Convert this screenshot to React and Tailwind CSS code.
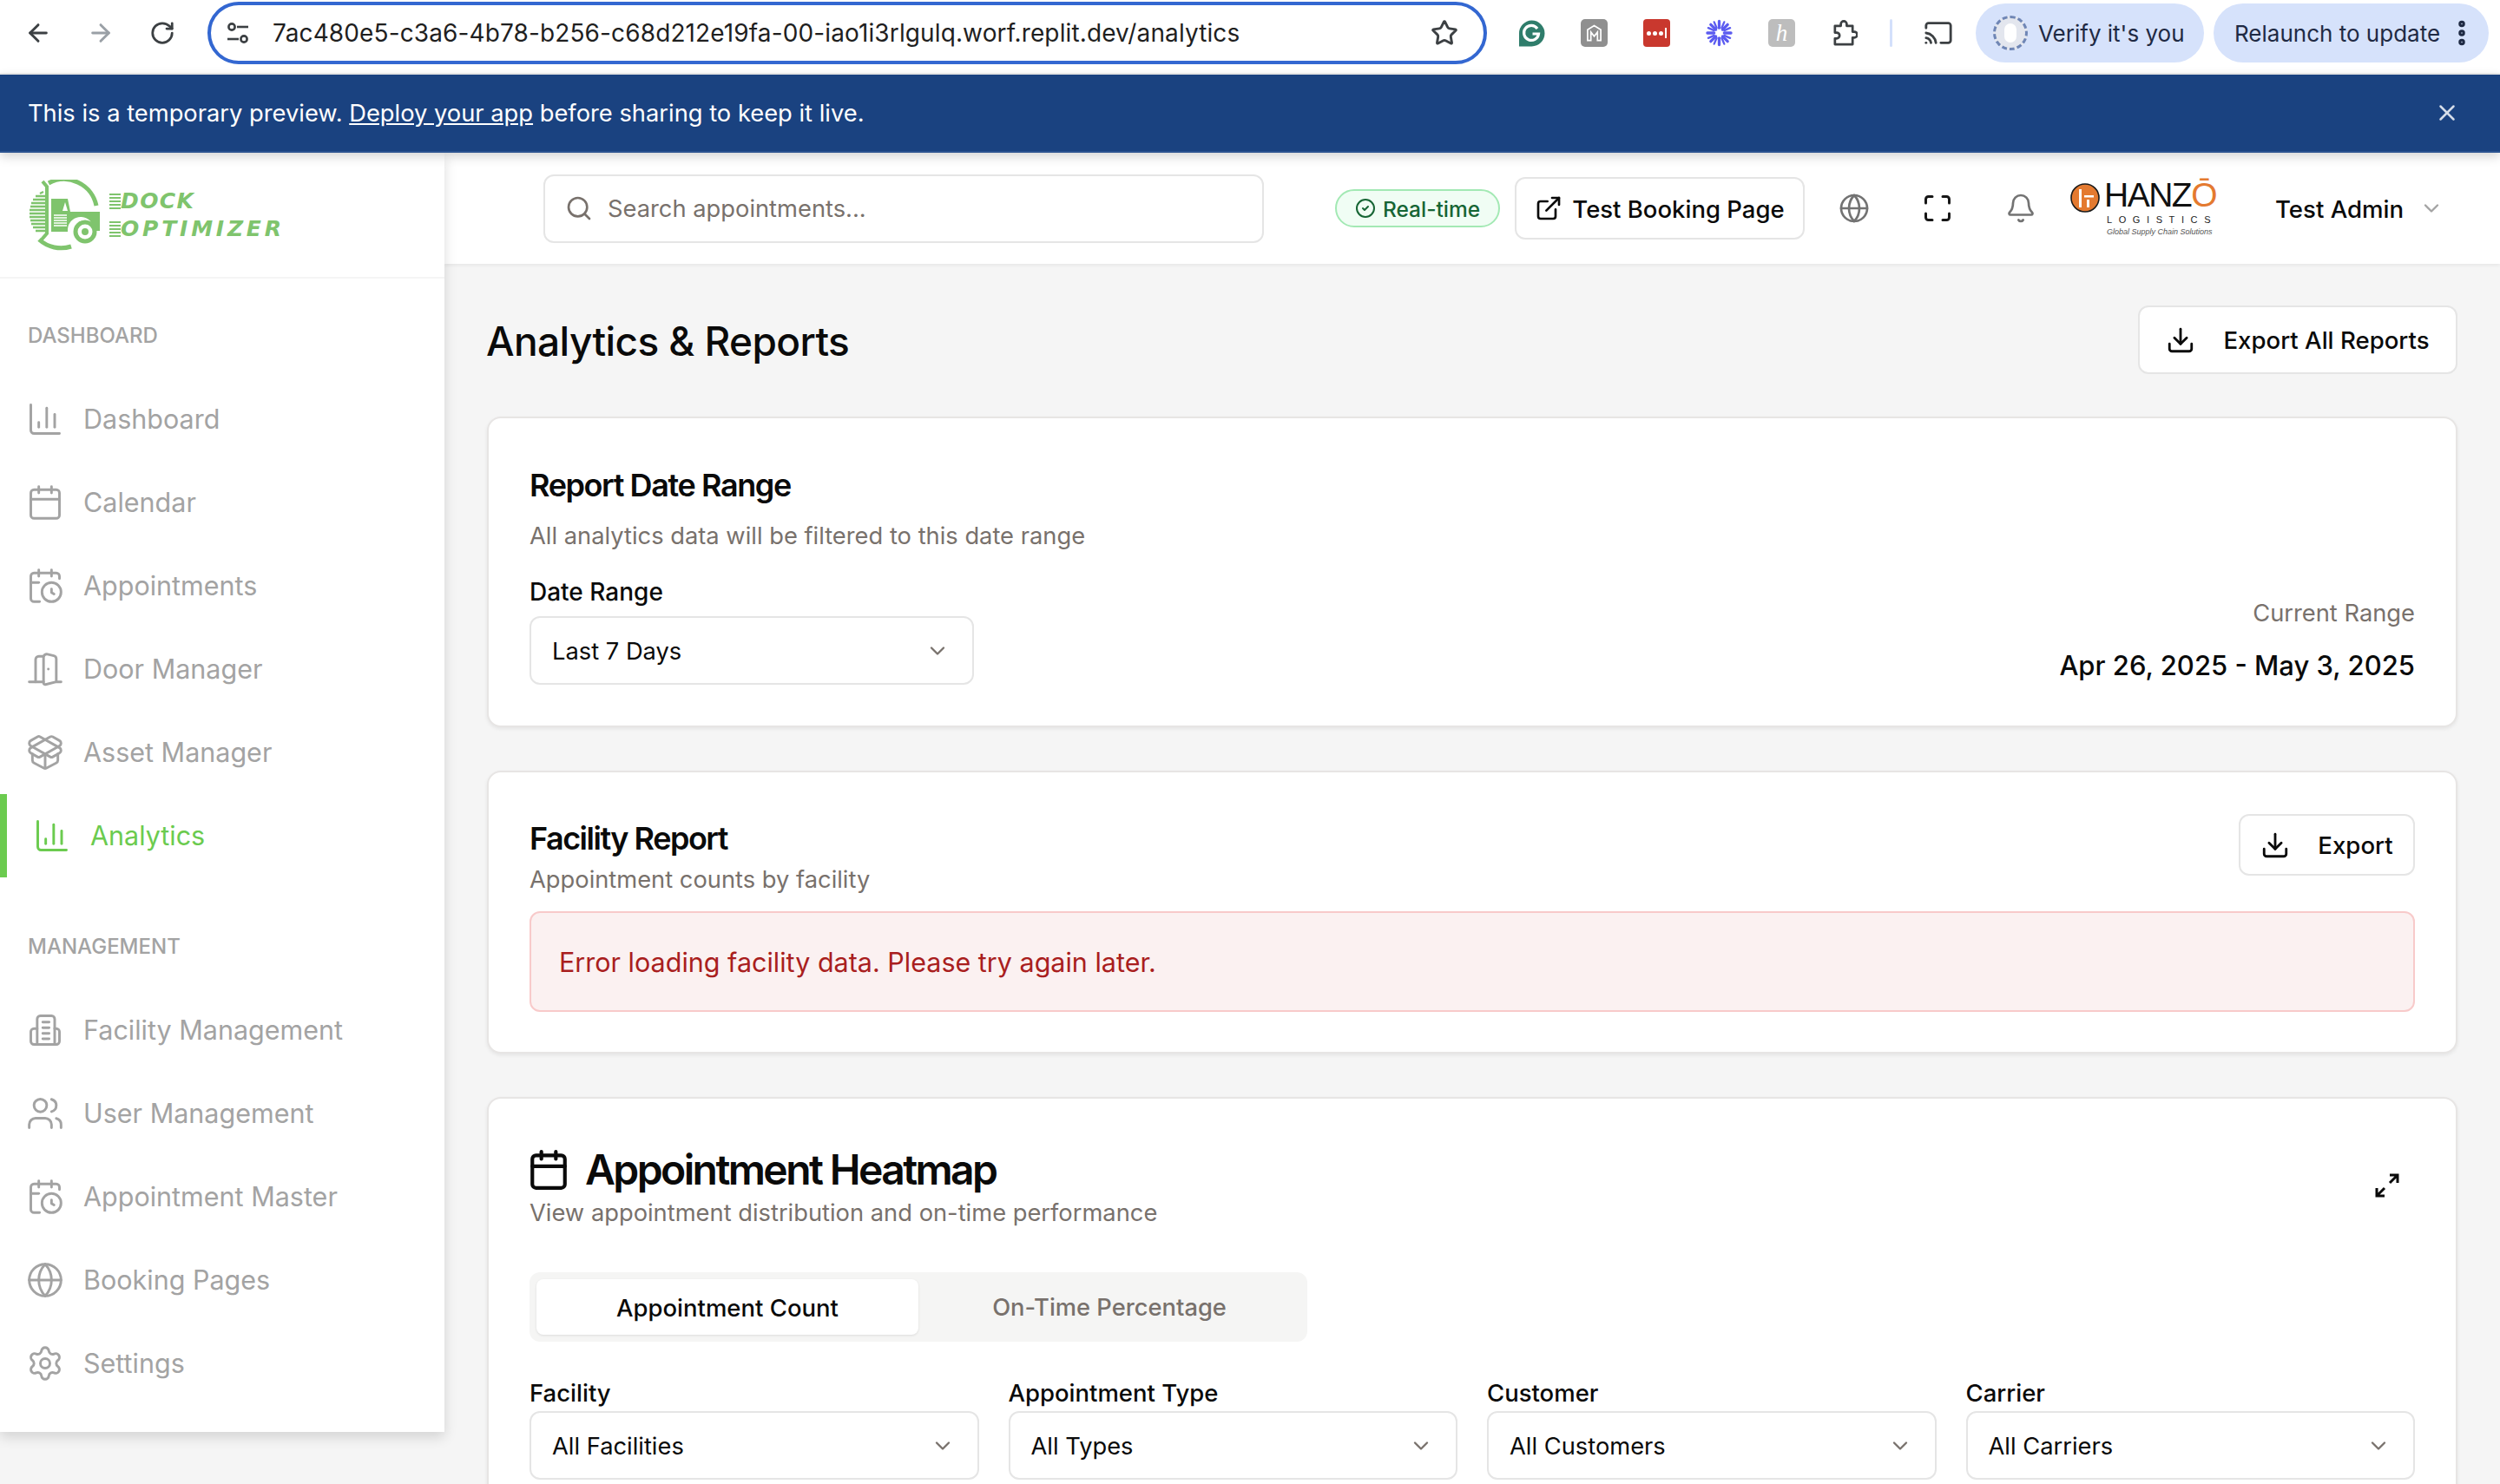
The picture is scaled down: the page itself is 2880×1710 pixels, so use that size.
import React from 'react';
import {
  ArrowLeft, ArrowRight, RotateCw, Star, Cast, MoreVertical, X, Search, CircleCheck, ExternalLink,
  Globe, Maximize, Bell, ChevronDown, ChartColumn, Calendar, CalendarClock, DoorOpen, PackageOpen,
  Users, Settings, Download,
} from 'lucide-react';

function FacilityIcon({ className, strokeWidth }) {
  return (
    <svg viewBox="0 0 24 24" className={className} fill="none" stroke="currentColor" strokeWidth={strokeWidth} strokeLinecap="round" strokeLinejoin="round">
      <path d="M7 21V5a2 2 0 0 1 2-2h7a2 2 0 0 1 2 2v16" />
      <path d="M7 11H5a2 2 0 0 0-2 2v6a2 2 0 0 0 2 2h14a2 2 0 0 0 2-2v-6a2 2 0 0 0-2-2h-1" />
      <path d="M10.5 7h4M10.5 10.500h4M10.5 14h4M10.500 17.500h4" />
    </svg>
  );
}

const mainNav = [
  { label: 'Dashboard', icon: ChartColumn },
  { label: 'Calendar', icon: Calendar },
  { label: 'Appointments', icon: CalendarClock },
  { label: 'Door Manager', icon: DoorOpen },
  { label: 'Asset Manager', icon: PackageOpen },
  { label: 'Analytics', icon: ChartColumn, active: true },
];

const managementNav = [
  { label: 'Facility Management', icon: FacilityIcon },
  { label: 'User Management', icon: Users },
  { label: 'Appointment Master', icon: CalendarClock },
  { label: 'Booking Pages', icon: Globe },
  { label: 'Settings', icon: Settings },
];

function TuneIcon() {
  return (
    <svg viewBox="0 0 26 26" className="w-[26px] h-[26px]" fill="none" stroke="#3c4043" strokeWidth="2.6">
      <circle cx="6" cy="6" r="3.6" />
      <path d="M12 6h13" />
      <circle cx="20" cy="20" r="3.6" />
      <path d="M1 20h13" />
    </svg>
  );
}

function PuzzleIcon() {
  return (
    <svg viewBox="0 0 32 32" className="w-[31px] h-[31px]" fill="none" stroke="#3c4043" strokeWidth="2.8" strokeLinejoin="round">
      <path d="M5 7h7V5a3.5 3.5 0 0 1 7 0v2h7v7h2a3.5 3.5 0 0 1 0 7h-2v8H5v-7h2a3 3 0 0 0 0-7H5z" />
    </svg>
  );
}

function ExtensionIcons() {
  return (
    <div className="flex items-center gap-[41px] ml-[36px]">
      <svg viewBox="0 0 31 31" className="w-[31px] h-[31px]">
        <path d="M15.5 0.5a15 15 0 1 1 0 30H1V15.5A15 15 0 0 1 15.5.5z" fill="#2f7d6b" />
        <path d="M22 10a8.5 8.5 0 1 0 1.5 6h-7" fill="none" stroke="#fff" strokeWidth="3.2" />
      </svg>
      <div className="w-[31px] h-[32px] rounded-[5px] bg-[#8f8f8f] flex items-center justify-center">
        <svg viewBox="0 0 20 22" className="w-[19px] h-[22px]" fill="none" stroke="#fff" strokeWidth="1.8">
          <path d="M2 7l8-5 8 5v13h-4V10l-4 5-4-5v10H2z" />
        </svg>
      </div>
      <div className="w-[31px] h-[32px] rounded-[4px] bg-[#c9382e] flex items-center justify-center gap-[2px]">
        <span className="w-[5px] h-[5px] rounded-full bg-white" />
        <span className="w-[5px] h-[5px] rounded-full bg-white" />
        <span className="w-[5px] h-[5px] rounded-full bg-white" />
        <span className="w-[2px] h-[12px] bg-white" />
      </div>
      <svg viewBox="0 0 32 32" className="w-[31px] h-[32px]" stroke="#5b5bf0" strokeWidth="3.4" strokeLinecap="round">
        <path d="M16 2v8M16 22v8M2 16h8M22 16h8M6 6l6 6M20 20l6 6M26 6l-6 6M12 20l-6 6" />
        <path d="M10 3l3 7M22 3l-3 7M10 29l3-7M22 29l-3-7M3 10l7 3M3 22l7-3M29 10l-7 3M29 22l-7-3" strokeWidth="2.4" />
      </svg>
      <div className="w-[31px] h-[32px] rounded-[5px] bg-[#bdbdbd] flex items-center justify-center text-white italic text-[27px] leading-none font-['Liberation_Serif',serif]">
        h
      </div>
      <PuzzleIcon />
    </div>
  );
}

function BrowserBar() {
  return (
    <div className="h-[86px] pb-[8px] bg-white border-b-2 border-[#eeeeee] flex items-center pl-[28px] text-[28px] font-['Inter',sans-serif]">
      <ArrowLeft className="w-[32px] h-[32px] text-[#3c4043]" strokeWidth={2.2} />
      <ArrowRight className="w-[32px] h-[32px] ml-[40px] text-[#9aa0a6]" strokeWidth={2.2} />
      <RotateCw className="w-[30px] h-[30px] ml-[40px] text-[#3c4043]" strokeWidth={2.2} />
      <div className="ml-[37px] w-[1474px] h-[72px] rounded-full border-[4px] border-[#3367d1] flex items-center pl-[18px] pr-[29px]">
        <TuneIcon />
        <span className="ml-[27px] text-[#1f1f1f] tracking-[0.12px] whitespace-nowrap">
          7ac480e5-c3a6-4b78-b256-c68d212e19fa-00-iao1i3rlgulq.worf.replit.dev/analytics
        </span>
        <Star className="ml-auto w-[32px] h-[32px] text-[#3c4043]" strokeWidth={2.2} />
      </div>
      <ExtensionIcons />
      <div className="ml-[37px] w-[3px] h-[32px] bg-[#d3e0fb] rounded-full" />
      <Cast className="ml-[36px] w-[34px] h-[34px] text-[#3c4043]" strokeWidth={2} />
      <div className="ml-[26px] w-[263px] h-[68px] rounded-full bg-[#d6e2fb] flex items-center pl-[20px] text-[#1f2a44]">
        <div className="w-[40px] h-[40px] rounded-full border-[3px] border-dashed border-[#6f86b5] bg-[#e3e6ee] flex items-center justify-center">
          <span className="w-[14px] h-[22px] rounded-full bg-white" />
        </div>
        <span className="ml-[12px] text-[26px] whitespace-nowrap">Verify it's you</span>
      </div>
      <div className="ml-[11px] w-[317px] h-[68px] rounded-full bg-[#d6e2fb] flex items-center pl-[24px] text-[#1f2a44]">
        <span className="text-[26px] whitespace-nowrap">Relaunch to update</span>
        <MoreVertical className="ml-[7px] w-[36px] h-[36px] text-[#1f2a44]" strokeWidth={3} />
      </div>
    </div>
  );
}

function TruckLogo() {
  return (
    <svg viewBox="0 0 84 82" className="w-[84px] h-[82px] shrink-0" fill="none">
      <path d="M24 4a38 38 0 0 1 55 26" stroke="#7fc46d" strokeWidth="5" />
      <path d="M50 77a38 38 0 0 1-37-8" stroke="#7fc46d" strokeWidth="5" />
      <path d="M17 2l5 6v54l-6 7" stroke="#7fc46d" strokeWidth="4" />
      <path
        d="M18 14L14 16M20 19H9M20 23H6M20 27H4M20 31H3M20 35H2M20 39H2M20 43H2M20 47H3M20 51H4M20 55H6M20 59H9"
        stroke="#7fc46d"
        strokeWidth="2.4"
      />
      <path d="M27 22h19l3 15h34v22h-7a15 15 0 0 0-30-2v3H27z" fill="#7fc46d" />
      <path d="M43 26l3 10h-6z" fill="#fff" />
      <path d="M30 41h15M30 44h15M30 47h15M30 50h15M30 53h15" stroke="#fff" strokeWidth="1.4" />
      <circle cx="66" cy="60" r="11" stroke="#7fc46d" strokeWidth="5" />
      <circle cx="66" cy="60" r="4" fill="#7fc46d" />
    </svg>
  );
}

function SpeedLines({ children, className }) {
  return (
    <div className="flex items-center h-[20px]">
      <div className="w-[13px] h-[18px] bg-[repeating-linear-gradient(to_bottom,#7fc46d_0px,#7fc46d_2px,#ffffff_2px,#ffffff_4px)]" />
      <span className={"text-[25px] leading-none font-bold italic text-[#7fc46d] font-['DejaVu_Sans',sans-serif] " + className}>
        {children}
      </span>
    </div>
  );
}

function NavRow({ item }) {
  const Icon = item.icon;
  return (
    <div
      className={
        item.active
          ? 'h-[96px] flex items-center gap-[22px] pl-[30px] border-l-[8px] border-[#6bcb4f] text-[#6bcb4f]'
          : 'h-[96px] flex items-center gap-[22px] pl-[30px] text-[#a3a3a3]'
      }
    >
      <Icon className="w-[44px] h-[44px] shrink-0" strokeWidth={1.6} />
      <span className="text-[30.5px] leading-[40px]">{item.label}</span>
    </div>
  );
}

function Sidebar() {
  return (
    <aside className="w-[512px] h-[1474px] shrink-0 bg-white shadow-[0_6px_14px_rgba(0,0,0,0.14)] z-10">
      <div className="h-[145px] border-b-2 border-[#f5f5f5] flex items-center pl-[32px] gap-[10px]">
        <TruckLogo />
        <div className="flex flex-col gap-[12px]">
          <SpeedLines className="tracking-[1.4px]">DOCK</SpeedLines>
          <SpeedLines className="tracking-[3.8px]">OPTIMIZER</SpeedLines>
        </div>
      </div>
      <div className="pt-[50px]">
        <div className="pl-[32px] text-[24px] leading-[32px] font-medium text-[#a3a3a3] uppercase">Dashboard</div>
        <div className="mt-[32px]">
          {mainNav.map((item) => (
            <NavRow key={item.label} item={item} />
          ))}
        </div>
        <div className="mt-[64px] pl-[32px] text-[24px] leading-[32px] font-medium text-[#a3a3a3] uppercase">Management</div>
        <div className="mt-[32px]">
          {managementNav.map((item) => (
            <NavRow key={item.label} item={item} />
          ))}
        </div>
      </div>
    </aside>
  );
}

function HanzoLogo() {
  return (
    <div className="ml-[39px] w-[172px] h-[62px] shrink-0 flex font-['Liberation_Sans',sans-serif]">
      <svg viewBox="0 0 34 34" className="w-[34px] h-[34px] mt-[2px] shrink-0">
        <circle cx="17" cy="17" r="16" fill="#e47a30" stroke="#1a1a1a" strokeWidth="1.6" />
        <path d="M10 7h3v21h-3zM16 14h11v2.5H16zM19 19h3v9h-3z" fill="#fff" />
      </svg>
      <div className="ml-[5px] flex flex-col">
        <div className="text-[39px] leading-[32px] h-[34px] tracking-[-1.5px] text-[#111111] whitespace-nowrap">
          HANZ<span className="text-[#e47a30]">Ō</span>
        </div>
        <div className="mt-[7px] ml-[3px] text-[11px] leading-[11px] tracking-[7.6px] text-[#222222] whitespace-nowrap">LOGISTICS</div>
        <div className="mt-[3px] ml-[3px] text-[9px] leading-[11px] italic text-[#555555] whitespace-nowrap">Global Supply Chain Solutions</div>
      </div>
    </div>
  );
}

function Header() {
  return (
    <header className="h-[128px] shrink-0 bg-white shadow-[0_2px_4px_rgba(0,0,0,0.06)] flex items-center pl-[114px]">
      <div className="w-[830px] h-[79px] shrink-0 rounded-[12px] border-2 border-[#e5e5e5] flex items-center pl-[23px] text-[#78716c]">
        <Search className="w-[32px] h-[32px]" strokeWidth={2} />
        <span className="ml-[17px] pt-[3px] text-[27.3px]">Search appointments...</span>
      </div>
      <div className="ml-[82px] w-[190px] h-[44px] shrink-0 rounded-full border-2 border-[#a3e9b4] bg-[#f0fdf4] flex items-center justify-center gap-[8px] text-[#166534]">
        <CircleCheck className="w-[24px] h-[24px]" strokeWidth={2} />
        <span className="pt-[2px] text-[24.500px] font-medium">Real-time</span>
      </div>
      <div className="ml-[17px] w-[334px] h-[72px] shrink-0 rounded-[12px] border-2 border-[#e5e5e5] flex items-center justify-center gap-[11px] text-[#0a0a0a]">
        <ExternalLink className="w-[32px] h-[32px]" strokeWidth={2} />
        <span className="pt-[3px] text-[27.5px] font-medium whitespace-nowrap">Test Booking Page</span>
      </div>
      <Globe className="ml-[39px] w-[36px] h-[36px] text-[#737373] shrink-0" strokeWidth={1.8} />
      <Maximize className="ml-[60px] w-[36px] h-[36px] text-[#171717] shrink-0" strokeWidth={2} />
      <Bell className="ml-[60px] w-[36px] h-[36px] text-[#737373] shrink-0" strokeWidth={1.8} />
      <HanzoLogo />
      <span className="ml-[64px] pt-[3px] text-[27.6px] font-medium text-[#0a0a0a] whitespace-nowrap">Test Admin</span>
      <ChevronDown className="ml-[18px] w-[28px] h-[28px] text-[#a3a3a3] shrink-0" strokeWidth={2} />
    </header>
  );
}

function SelectBox({ value, className }) {
  return (
    <div className={'h-[79px] rounded-[12px] border-2 border-[#e5e5e5] bg-white flex items-center justify-between pl-[24px] pr-[26px] ' + (className || '')}>
      <span className="pt-[3px] text-[27.3px] text-[#0a0a0a]">{value}</span>
      <ChevronDown className="w-[28px] h-[28px] text-[#78716c]" strokeWidth={2} />
    </div>
  );
}

function OutlineButton({ label, className }) {
  return (
    <div className={'shrink-0 rounded-[12px] border-2 border-[#e5e5e5] bg-white flex items-center justify-center gap-[32px] text-[#0a0a0a] ' + className}>
      <Download className="w-[34px] h-[34px]" strokeWidth={2} />
      <span className="pt-[3px] text-[27.6px] font-medium whitespace-nowrap">{label}</span>
    </div>
  );
}

function Card({ children, className }) {
  return (
    <section className={'rounded-[16px] border-2 border-[#e7e5e4] bg-white shadow-[0_2px_4px_rgba(0,0,0,0.07)] px-[47px] ' + (className || '')}>
      {children}
    </section>
  );
}

function FilterField({ label, value }) {
  return (
    <div>
      <div className="text-[27.5px] leading-[40px] font-medium text-[#0a0a0a]">{label}</div>
      <SelectBox value={value} className="mt-[1px]" />
    </div>
  );
}

function Content() {
  return (
    <main className="pt-[48px] px-[49px] flex flex-col">
      <div className="flex items-center justify-between">
        <h1 className="text-[46px] leading-[56px] pt-[2px] -ml-[1px] font-medium tracking-[-0.6px] text-[#0a0a0a]">Analytics &amp; Reports</h1>
        <OutlineButton label="Export All Reports" className="w-[368px] h-[79px]" />
      </div>

      <Card className="mt-[49px] h-[358px] pt-[53px] flex justify-between">
        <div>
          <h2 className="text-[36px] leading-[48px] font-semibold tracking-[-1.4px] text-[#0a0a0a]">Report Date Range</h2>
          <p className="mt-[15px] text-[27.3px] leading-[40px] text-[#78716c]">All analytics data will be filtered to this date range</p>
          <div className="mt-[24px] text-[28px] leading-[40px] font-medium text-[#0a0a0a]">Date Range</div>
          <SelectBox value="Last 7 Days" className="mt-[8px] w-[512px]" />
        </div>
        <div className="flex flex-col items-end pt-[152px]">
          <span className="text-[27.3px] leading-[40px] text-[#78716c]">Current Range</span>
          <span className="mt-[20px] text-[31px] leading-[40px] font-medium text-[#0a0a0a]">Apr 26, 2025 - May 3, 2025</span>
        </div>
      </Card>

      <Card className="mt-[50px] h-[326px] pt-[48px]">
        <div className="flex items-start justify-between">
          <div className="pt-[4px]">
            <h2 className="text-[36px] leading-[48px] font-semibold tracking-[-1.5px] text-[#0a0a0a]">Facility Report</h2>
            <p className="mt-[4px] text-[27.3px] leading-[40px] text-[#78716c]">Appointment counts by facility</p>
          </div>
          <OutlineButton label="Export" className="w-[203px] h-[71px]" />
        </div>
        <div className="mt-[16px] h-[116px] rounded-[12px] border-2 border-[#f8caca] bg-[#fbf1f1] flex items-center pl-[32px]">
          <span className="pt-[2px] text-[30.5px] text-[#a91e1e]">Error loading facility data. Please try again later.</span>
        </div>
      </Card>

      <Card className="mt-[50px] pt-[54px] pb-[48px]">
        <div className="flex items-start justify-between">
          <div>
            <div className="flex items-center gap-[17px]">
              <Calendar className="w-[50px] h-[50px] text-[#0a0a0a] -ml-[3px]" strokeWidth={2} />
              <h2 className="text-[48px] leading-[56px] font-semibold tracking-[-2.6px] text-[#0a0a0a]">Appointment Heatmap</h2>
            </div>
            <p className="mt-[2px] text-[27.3px] leading-[40px] text-[#78716c]">View appointment distribution and on-time performance</p>
          </div>
          <svg viewBox="0 0 28 28" className="w-[28px] h-[28px] mt-[32px] mr-[18px]" fill="none" stroke="#0a0a0a" strokeWidth="3">
            <path d="M17 2h9v9M26 2l-9 9M11 26H2v-9M2 26l9-9" />
          </svg>
        </div>
        <div className="mt-[48px] w-[896px] h-[80px] rounded-[12px] bg-[#f5f5f4] flex items-center pl-[8px]">
          <div className="w-[440px] h-[64px] pt-[3px] rounded-[8px] bg-white shadow-[0_1px_3px_rgba(0,0,0,0.1)] flex items-center justify-center text-[27.5px] font-medium text-[#0a0a0a]">
            Appointment Count
          </div>
          <div className="w-[440px] pt-[3px] flex items-center justify-center text-[27.3px] font-medium text-[#78716c]">
            On-Time Percentage
          </div>
        </div>
        <div className="mt-[39px] grid grid-cols-4 gap-[34px]">
          <FilterField label="Facility" value="All Facilities" />
          <FilterField label="Appointment Type" value="All Types" />
          <FilterField label="Customer" value="All Customers" />
          <FilterField label="Carrier" value="All Carriers" />
        </div>
      </Card>
    </main>
  );
}

export default function App() {
  return (
    <div className="h-[1710px] overflow-hidden bg-[#f5f5f5] font-['Inter',sans-serif]">
      <BrowserBar />
      <div className="relative z-20 h-[90px] bg-[#1a4280] border-b-2 border-[#2b5390] shadow-[0_4px_12px_rgba(0,0,0,0.18)] flex items-center justify-between pl-[32px] pr-[46px] text-[27.3px] text-white">
        <span className="pt-[2px]">
          This is a temporary preview. <span className="underline">Deploy your app</span> before sharing to keep it live.
        </span>
        <X className="w-[30px] h-[30px] text-[#d5dde9]" strokeWidth={2} />
      </div>
      <div className="flex">
        <Sidebar />
        <div className="flex-1 min-w-0 flex flex-col">
          <Header />
          <Content />
        </div>
      </div>
    </div>
  );
}
